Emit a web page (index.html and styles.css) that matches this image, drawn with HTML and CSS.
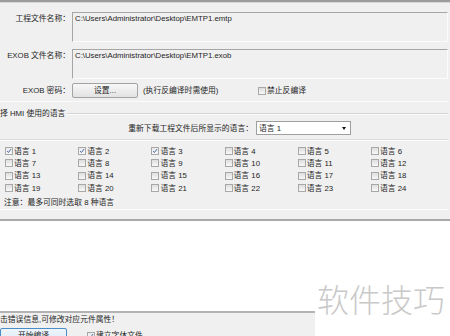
FILE: index.html
```html
<!DOCTYPE html>
<html lang="zh-CN">
<head>
<meta charset="utf-8">
<link rel="stylesheet" href="styles.css">
</head>
<body>
<div class="top-edge"></div>
<div class="panel">
  <div class="field-row">
    <div class="field-label">工程文件名称：</div>
    <div class="field-box">C:\Users\Administrator\Desktop\EMTP1.emtp</div>
  </div>
  <div class="field-row gap">
    <div class="field-label">EXOB 文件名称：</div>
    <div class="field-box">C:\Users\Administrator\Desktop\EMTP1.exob</div>
  </div>
  <div class="pwd-row">
    <div class="field-label mid">EXOB 密码：</div>
    <div class="btn">设置...</div>
    <div class="hint">(执行反编译时需使用)</div>
    <div class="check-item"><span class="cb"></span><span>禁止反编译</span></div>
  </div>
  <div class="sep-light"></div>
  <div class="group-head">
    <span class="group-title">择 HMI 使用的语言</span>
    <span class="group-line"></span>
  </div>
  <div class="lang-row">
    <div class="lang-label">重新下载工程文件后所显示的语言：</div>
    <div class="combo"><span>语言 1</span><span class="arrow"></span></div>
  </div>
  <div class="sep-double"></div>
  <div class="lang-grid">
    <div class="check-item"><span class="cb on"><svg viewBox="0 0 8 8"><path d="M1.6 4.2 L3.2 6 L6.6 1.6"/></svg></span><span>语言 1</span></div>
    <div class="check-item"><span class="cb on"><svg viewBox="0 0 8 8"><path d="M1.6 4.2 L3.2 6 L6.6 1.6"/></svg></span><span>语言 2</span></div>
    <div class="check-item"><span class="cb on"><svg viewBox="0 0 8 8"><path d="M1.6 4.2 L3.2 6 L6.6 1.6"/></svg></span><span>语言 3</span></div>
    <div class="check-item"><span class="cb"></span><span>语言 4</span></div>
    <div class="check-item"><span class="cb"></span><span>语言 5</span></div>
    <div class="check-item"><span class="cb"></span><span>语言 6</span></div>
    <div class="check-item"><span class="cb"></span><span>语言 7</span></div>
    <div class="check-item"><span class="cb"></span><span>语言 8</span></div>
    <div class="check-item"><span class="cb"></span><span>语言 9</span></div>
    <div class="check-item"><span class="cb"></span><span>语言 10</span></div>
    <div class="check-item"><span class="cb"></span><span>语言 11</span></div>
    <div class="check-item"><span class="cb"></span><span>语言 12</span></div>
    <div class="check-item"><span class="cb"></span><span>语言 13</span></div>
    <div class="check-item"><span class="cb"></span><span>语言 14</span></div>
    <div class="check-item"><span class="cb"></span><span>语言 15</span></div>
    <div class="check-item"><span class="cb"></span><span>语言 16</span></div>
    <div class="check-item"><span class="cb"></span><span>语言 17</span></div>
    <div class="check-item"><span class="cb"></span><span>语言 18</span></div>
    <div class="check-item"><span class="cb"></span><span>语言 19</span></div>
    <div class="check-item"><span class="cb"></span><span>语言 20</span></div>
    <div class="check-item"><span class="cb"></span><span>语言 21</span></div>
    <div class="check-item"><span class="cb"></span><span>语言 22</span></div>
    <div class="check-item"><span class="cb"></span><span>语言 23</span></div>
    <div class="check-item"><span class="cb"></span><span>语言 24</span></div>
  </div>
  <div class="note">注意：最多可同时选取 8 种语言</div>
  <div class="sep-light low"></div>
</div>
<div class="blank"></div>
<div class="bottom-panel">
  <div class="msg">击错误信息,可修改对应元件属性！</div>
  <div class="bottom-row">
    <div class="btn primary">开始编译</div>
    <div class="check-item"><span class="cb on"><svg viewBox="0 0 8 8"><path d="M1.6 4.2 L3.2 6 L6.6 1.6"/></svg></span><span>建立字体文件</span></div>
  </div>
</div>
<div class="watermark">软件技巧</div>
</body>
</html>
```

FILE: styles.css
```css
* { box-sizing: border-box; }
html, body {
  margin: 0;
  padding: 0;
}
body {
  width: 450px;
  height: 336px;
  overflow: hidden;
  position: relative;
  background: #ffffff;
  font-family: "Liberation Sans", "Noto Sans CJK SC", sans-serif;
  font-size: 7.8px;
  line-height: 9px;
  color: #1e1e1e;
}
.top-edge {
  height: 3px;
  background: #9c9c9c;
  border-bottom: 1px solid #d6d6d6;
}
.panel {
  background: #f0f0f0;
  padding: 9px 2px 9px 0;
  border-bottom: 2px solid #a9a9a9;
}
.field-row {
  display: flex;
  height: 30px;
}
.field-row.gap { margin-top: 7px; }
.field-label {
  width: 70px;
  margin-right: 2px;
  text-align: right;
  padding-top: 2px;
  white-space: nowrap;
}
.field-label.mid { padding-top: 0; }
.field-box {
  flex: 1;
  border: 1px solid;
  border-color: #a6a6a6 #fbfbfb #fbfbfb #a6a6a6;
  background: #f0f0f0;
  padding: 1px 2px;
  white-space: nowrap;
  overflow: hidden;
}
.pwd-row {
  display: flex;
  align-items: center;
  margin-top: 4px;
  height: 15px;
}
.btn {
  width: 66px;
  height: 15px;
  border: 1px solid #a3a3a3;
  border-radius: 2px;
  background: linear-gradient(#f7f7f7, #e3e3e3);
  text-align: center;
  line-height: 13px;
}
.hint {
  margin-left: 5px;
  width: 115px;
}
.check-item {
  display: flex;
  align-items: center;
  gap: 1px;
  white-space: nowrap;
}
.cb {
  width: 8px;
  height: 8px;
  border: 1px solid #a8a8a8;
  background: linear-gradient(#dedede, #f8f8f8);
  display: inline-flex;
}
.cb.on { background: linear-gradient(#e8e8e8, #fafafa); }
.cb svg {
  width: 6px;
  height: 6px;
}
.cb path {
  fill: none;
  stroke: #3d5fa0;
  stroke-width: 1.3;
}
.sep-light {
  margin-top: 3px;
  height: 1px;
  background: #fbfbfb;
}
.sep-light.low { margin-top: 2px; }
.group-head {
  display: flex;
  align-items: center;
  margin-top: 7px;
  height: 9px;
}
.group-title { white-space: nowrap; }
.group-line {
  flex: 1;
  margin-left: 2px;
  height: 2px;
  border-top: 1px solid #d4d4d4;
  border-bottom: 1px solid #fcfcfc;
}
.lang-row {
  display: flex;
  align-items: center;
  margin-top: 3px;
  height: 14px;
}
.lang-label {
  width: 253px;
  text-align: right;
  white-space: nowrap;
}
.combo {
  margin-left: 3px;
  width: 95px;
  height: 14px;
  border: 1px solid #9f9f9f;
  background: #ffffff;
  display: flex;
  align-items: center;
  justify-content: space-between;
  padding: 0 4px 0 2px;
}
.arrow {
  width: 0;
  height: 0;
  border-left: 2.5px solid transparent;
  border-right: 2.5px solid transparent;
  border-top: 3px solid #111;
}
.sep-double {
  margin-top: 4px;
  height: 2px;
  border-top: 1px solid #dcdcdc;
  border-bottom: 1px solid #fcfcfc;
}
.lang-grid {
  display: grid;
  grid-template-columns: repeat(6, 73.2px);
  grid-auto-rows: 12.33px;
  padding-left: 5px;
  margin-top: 4px;
}
.note {
  margin-top: 4px;
  padding-left: 4px;
}
.blank { height: 90px; }
.bottom-panel {
  width: 315px;
  height: 26px;
  background: #f0f0f0;
  border-top: 2px solid #b3b3b3;
  padding-top: 2px;
}
.msg { white-space: nowrap; }
.bottom-row {
  display: flex;
  align-items: flex-start;
  margin-top: 4px;
}
.btn.primary {
  width: 67px;
  border-color: #4a8cc8;
  background: linear-gradient(#eef5fb, #dcebf8);
}
.bottom-row .check-item {
  margin-left: 20px;
  margin-top: 3px;
}
.watermark {
  position: absolute;
  left: 317px;
  top: 281px;
  font-family: "Noto Sans CJK SC", sans-serif;
  font-weight: 300;
  font-size: 32px;
  line-height: 34px;
  color: #c9c9c9;
  white-space: nowrap;
}
```
